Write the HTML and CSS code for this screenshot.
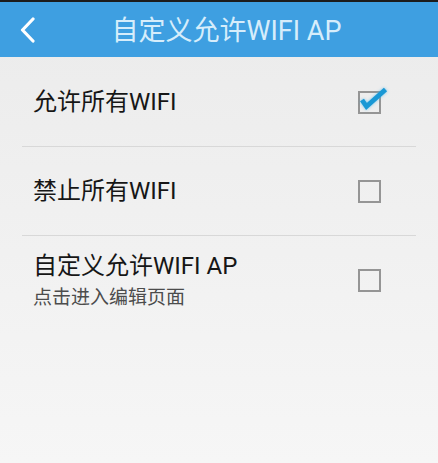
FILE: index.html
```html
<!DOCTYPE html>
<html lang="zh-CN">
<head>
<meta charset="utf-8">
<title>自定义允许WIFI AP</title>
<link rel="stylesheet" href="styles.css">
</head>
<body>
<div class="status"></div>
<header class="bar">
  <div class="back">
    <svg width="16" height="26" viewBox="0 0 16 26"><path d="M13 2 L2.5 13 L13 24" fill="none" stroke="#ffffff" stroke-width="3.2" stroke-linecap="round" stroke-linejoin="round"/></svg>
  </div>
  <h1 class="title">自定义允许WIFI AP</h1>
  <div class="spacer"></div>
</header>
<ul class="list">
  <li class="row">
    <div class="text"><div class="label">允许所有WIFI</div></div>
    <span class="box checked">
      <svg class="tick" width="36" height="30" viewBox="0 0 36 30"><path d="M7 15 L11.5 21.5 L30.5 4.5" fill="none" stroke="#1a98d5" stroke-width="4.8" stroke-linejoin="miter"/></svg>
    </span>
  </li>
  <li class="row">
    <div class="text"><div class="label">禁止所有WIFI</div></div>
    <span class="box"></span>
  </li>
  <li class="row last">
    <div class="text">
      <div class="label">自定义允许WIFI AP</div>
      <div class="sub">点击进入编辑页面</div>
    </div>
    <span class="box"></span>
  </li>
</ul>
</body>
</html>
```
FILE: styles.css
```css
html, body {
  margin: 0;
  padding: 0;
}
body {
  min-height: 463px;
  background: linear-gradient(#ebebeb, #f6f6f6);
  font-family: Roboto, "Noto Sans CJK SC", sans-serif;
}
.status {
  height: 2px;
  background: #1c1c1c;
}
.bar {
  height: 55px;
  background: #3e9fe1;
  display: flex;
  align-items: center;
}
.back {
  width: 56px;
  box-sizing: border-box;
  padding-left: 20px;
  display: flex;
  align-items: center;
}
.title {
  flex: 1;
  margin: 0;
  text-align: center;
  font-size: 27px;
  font-weight: normal;
  color: #d6edfb;
  line-height: 32px;
  padding-top: 2px;
}
.spacer {
  width: 41px;
}
.list {
  list-style: none;
  margin: 0;
  padding: 1px 22px 0;
}
.row {
  height: 88px;
  border-bottom: 1px solid #d8d8d8;
  display: flex;
  align-items: center;
  padding-left: 11px;
  padding-right: 35px;
}
.row.last {
  border-bottom: none;
}
.text {
  flex: 1;
}
.label {
  font-size: 24px;
  line-height: 30px;
  color: #161616;
}
.sub {
  font-size: 19px;
  line-height: 24px;
  margin-top: 5px;
  color: #4c4c4c;
}
.box {
  position: relative;
  width: 19px;
  height: 19px;
  border: 2px solid #959595;
  margin-top: 1px;
}
.tick {
  position: absolute;
  left: -5px;
  top: -8px;
  filter: drop-shadow(0 0 1.5px rgba(60, 180, 235, 0.7));
}
```
